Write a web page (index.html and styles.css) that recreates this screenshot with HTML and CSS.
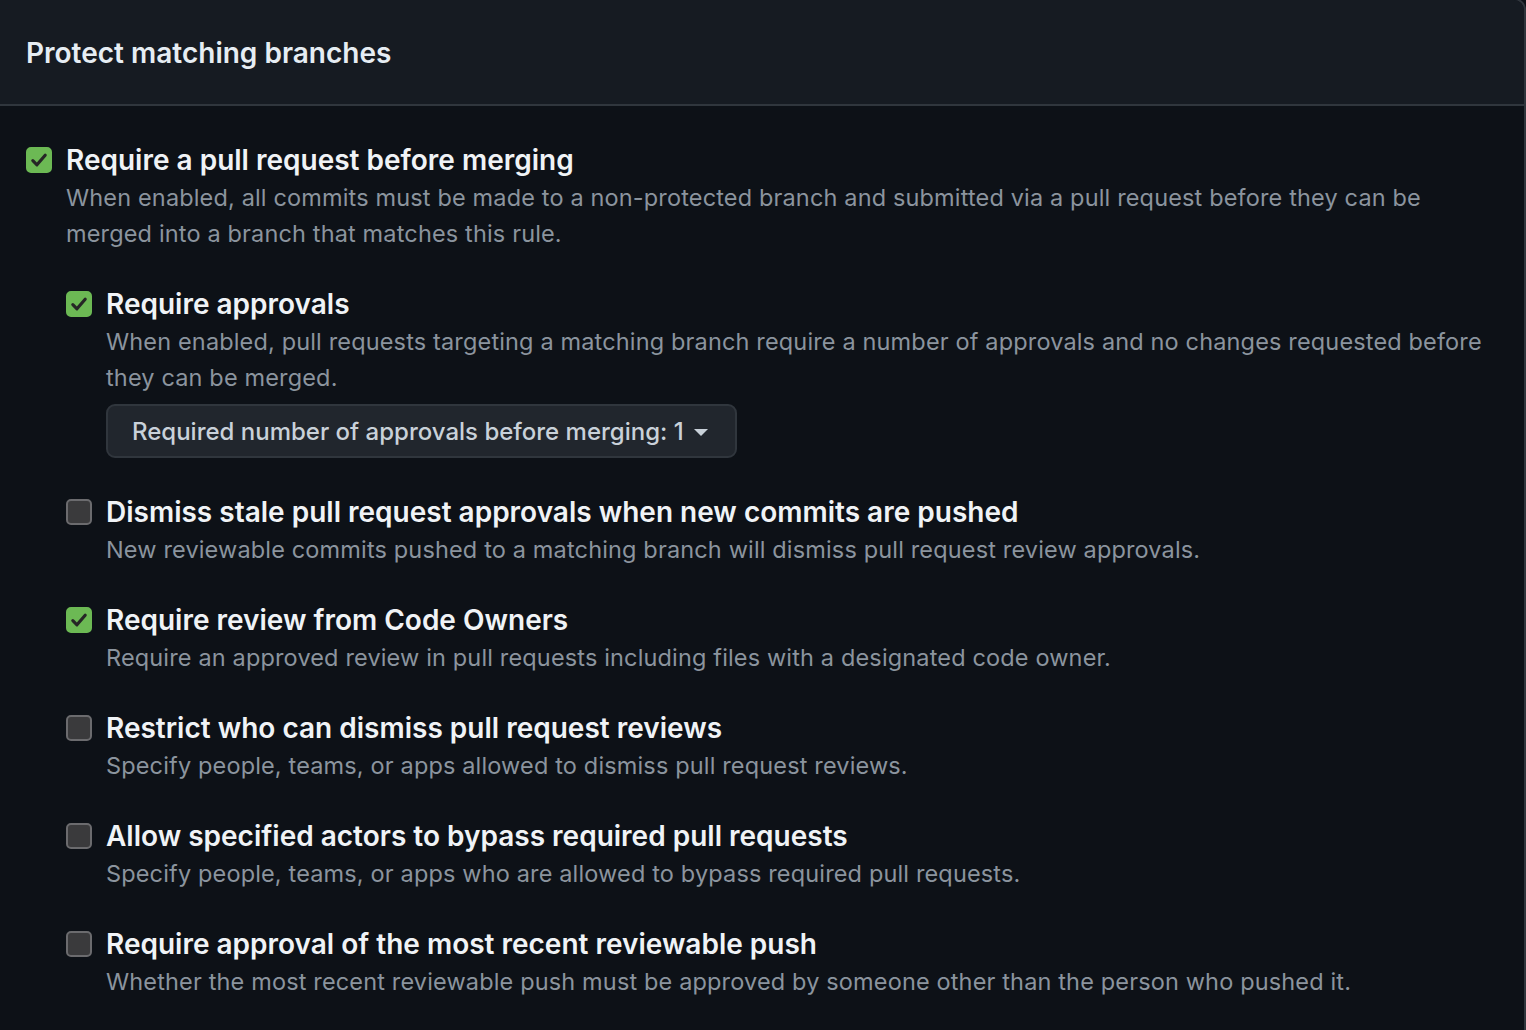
FILE: index.html
```html
<!DOCTYPE html>
<html>
<head>
<meta charset="utf-8">
<link rel="stylesheet" href="styles.css">
</head>
<body>
<div class="card">
  <div class="card-header">
    <h2 class="card-title">Protect matching branches</h2>
  </div>
  <div class="card-body">
    <div class="opt">
      <span class="cb checked"><svg viewBox="0 0 16 16"><path d="M3.5 8.5l3 3 6-7" /></svg></span>
      <div class="opt-main">
        <div class="opt-title">Require a pull request before merging</div>
        <div class="opt-desc">When enabled, all commits must be made to a non-protected branch and submitted via a pull request before they can be merged into a branch that matches this rule.</div>
        <div class="sub">
          <div class="opt">
            <span class="cb checked"><svg viewBox="0 0 16 16"><path d="M3.5 8.5l3 3 6-7" /></svg></span>
            <div class="opt-main">
              <div class="opt-title">Require approvals</div>
              <div class="opt-desc">When enabled, pull requests targeting a matching branch require a number of approvals and no changes requested before they can be merged.</div>
              <button class="select">Required number of approvals before merging: 1<span class="caret"></span></button>
            </div>
          </div>
          <div class="opt">
            <span class="cb"></span>
            <div class="opt-main">
              <div class="opt-title">Dismiss stale pull request approvals when new commits are pushed</div>
              <div class="opt-desc">New reviewable commits pushed to a matching branch will dismiss pull request review approvals.</div>
            </div>
          </div>
          <div class="opt">
            <span class="cb checked"><svg viewBox="0 0 16 16"><path d="M3.5 8.5l3 3 6-7" /></svg></span>
            <div class="opt-main">
              <div class="opt-title">Require review from Code Owners</div>
              <div class="opt-desc">Require an approved review in pull requests including files with a designated code owner.</div>
            </div>
          </div>
          <div class="opt">
            <span class="cb"></span>
            <div class="opt-main">
              <div class="opt-title">Restrict who can dismiss pull request reviews</div>
              <div class="opt-desc">Specify people, teams, or apps allowed to dismiss pull request reviews.</div>
            </div>
          </div>
          <div class="opt">
            <span class="cb"></span>
            <div class="opt-main">
              <div class="opt-title">Allow specified actors to bypass required pull requests</div>
              <div class="opt-desc">Specify people, teams, or apps who are allowed to bypass required pull requests.</div>
            </div>
          </div>
          <div class="opt">
            <span class="cb"></span>
            <div class="opt-main">
              <div class="opt-title">Require approval of the most recent reviewable push</div>
              <div class="opt-desc">Whether the most recent reviewable push must be approved by someone other than the person who pushed it.</div>
            </div>
          </div>
        </div>
      </div>
    </div>
  </div>
</div>
</body>
</html>
```
FILE: styles.css
```css
html, body {
  margin: 0;
  padding: 0;
  background: #0d1117;
  overflow: hidden;
}
body {
  font-family: Inter, "Noto Sans", sans-serif;
  color: #e6edf3;
}
.card {
  margin: -2px 0 0 -20px;
  border: 2px solid #30363d;
  border-radius: 12px;
  background: #0d1117;
  overflow: hidden;
}
.card-header {
  background: #161b22;
  height: 106px;
  box-sizing: border-box;
  border-bottom: 2px solid #30363d;
  display: flex;
  align-items: center;
  padding-left: 44px;
  padding-top: 2px;
}
.card-title {
  margin: 0;
  font-size: 28px;
  font-weight: 600;
  color: #e6edf3;
}
.card-body {
  padding: 34px 0 40px 44px;
}
.opt {
  display: flex;
  gap: 14px;
  margin-bottom: 32px;
}
.sub {
  margin-top: 32px;
}
.cb {
  flex: none;
  width: 26px;
  height: 26px;
  margin-top: 7px;
  box-sizing: border-box;
  border-radius: 5px;
  background: #3a3a3c;
  border: 2px solid #6b6b6e;
  display: flex;
  align-items: center;
  justify-content: center;
}
.cb.checked {
  background: #6cb954;
  border-color: #6cb954;
}
.cb svg {
  width: 22px;
  height: 22px;
  fill: none;
  stroke: #262626;
  stroke-width: 2.3;
  stroke-linecap: round;
  stroke-linejoin: round;
}
.opt-main {
  flex: 1;
  min-width: 0;
}
.opt-title {
  font-size: 28px;
  line-height: 40px;
  font-weight: 600;
  color: #f0f3f6;
}
.opt-desc {
  font-size: 23.5px;
  line-height: 36px;
  color: #8b949e;
  letter-spacing: 0.15px;
  padding-right: 30px;
}
.select {
  margin-top: 8px;
  margin-bottom: 2px;
  height: 54px;
  width: 631px;
  box-sizing: border-box;
  background: #21262d;
  border: 2px solid #30363d;
  border-radius: 9px;
  color: #c9d1d9;
  font-family: Inter, "Noto Sans", sans-serif;
  font-size: 24px;
  font-weight: 500;
  padding: 0 24px;
  display: flex;
  align-items: center;
  gap: 10px;
}
.caret {
  width: 0;
  height: 0;
  border-left: 7px solid transparent;
  border-right: 7px solid transparent;
  border-top: 7px solid #c9d1d9;
  margin-top: 2px;
}
```
